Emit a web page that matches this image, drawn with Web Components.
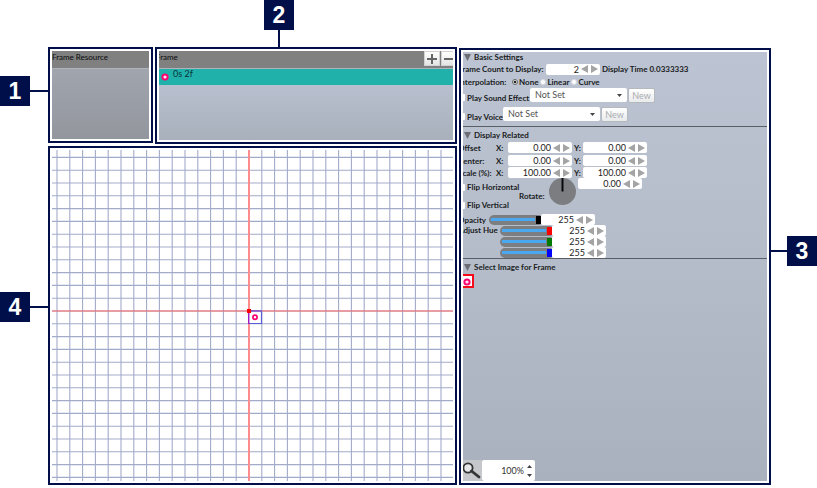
<!DOCTYPE html>
<html lang="en">
<head>
<meta charset="utf-8">
<title>Animation frame editor</title>
<style>
html,body{margin:0;background:#fff}
body{font-family:Lato,"Noto Sans",sans-serif;font-size:8px;line-height:10px;color:#1a1c22}
</style>
</head>
<body>
<frame-editor></frame-editor>
<script>
const define = (name, html, setup) => customElements.define(name, class extends HTMLElement {
  connectedCallback() {
    if (this.shadowRoot) return;
    const t = document.createElement('template');
    t.innerHTML = html;
    this.attachShadow({mode: 'open'}).append(t.content.cloneNode(true));
    if (setup) setup(this, this.shadowRoot);
  }
});

define('callout-panel', `<style>
:host{display:flex;position:relative;box-sizing:border-box;border:2px solid #000f49;padding:2px;background:#fff;min-width:0}
.body{flex:1;min-width:0;overflow:hidden;display:flex;flex-direction:column}
.tag{position:absolute;display:flex;align-items:center}
.tag b{box-sizing:border-box;width:30px;height:30px;background:#000f49;color:#fff;font:bold 23px/30px "Liberation Sans",sans-serif;text-align:center}
.tag i{background:#000f49;width:18px;height:2px}
:host([side=left]) .tag{right:100%;top:27px;margin-right:2px}
:host([side=left][low]) .tag{top:144px}
:host([side=top]) .tag{bottom:100%;left:107px;margin-bottom:2px;flex-direction:column}
:host([side=top]) .tag i{width:2px;height:17px}
:host([side=right]) .tag{left:100%;top:186px;margin-left:2px;flex-direction:row-reverse}
:host([side=right]) .tag i{width:16px}
</style><div class="body"><slot></slot></div><div class="tag"><b></b><i></i></div>`,
(h, r) => { r.querySelector('b').textContent = h.getAttribute('number'); });

define('pane-header', `<style>
:host{display:flex;justify-content:space-between;height:17px;background:#808080;border-bottom:1px solid #aeb3bb;color:#08080c;flex:none}
.t{line-height:13px;white-space:nowrap}
.a{display:flex;gap:1px;margin-right:-4px}
</style><span class="t"><slot></slot></span><span class="a"><slot name="actions"></slot></span>`);

define('tool-button', `<style>
:host{display:block}
button{display:block;padding:0;width:16px;height:15px;border:1px solid #d2d2d2;background:linear-gradient(#fff,#e4e4e4)}
svg{display:block;width:14px;height:13px}
</style><button><svg viewBox="0 0 14 13" stroke="#666" stroke-width="2"><path/></svg></button>`,
(h, r) => {
  r.querySelector('path').setAttribute('d', h.hasAttribute('minus') ? 'M2 7H12' : 'M2 7H12M7 2V12');
  r.querySelector('button').setAttribute('aria-label', h.hasAttribute('minus') ? 'Remove frame' : 'Add frame');
});

define('sprite-dot', `<style>:host{display:block;width:8px;height:8px}svg{display:block}</style>
<svg width="8" height="8" viewBox="0 0 8 8"><circle cx="4" cy="4" r="2.6" fill="#fff" stroke="#ff0073" stroke-width="2"/><circle cx="4" cy="4" r=".6" fill="#ff7ab5"/></svg>`);

define('frame-item', `<style>
:host{display:flex;height:16px;background:#20b2aa;color:#0b3340;padding-left:2px;gap:4px;font-size:9px;flex:none}
sprite-dot{margin-top:4px}span{line-height:10px}
</style><sprite-dot></sprite-dot><span><slot></slot></span>`);

define('grid-canvas', `<style>:host{display:block;flex:1;position:relative;overflow:hidden}svg{position:absolute;inset:0;width:100%;height:100%}</style>
<svg><rect width="100%" height="100%" fill="#fff"/><path class="g" stroke="#a3abca" stroke-width="1.1" fill="none"/>
<path d="M197 0V4000" stroke="#ff8c8c" stroke-width="2"/><path d="M0 161H4000" stroke="#ff6464" stroke-width="1.2"/>
<path d="M197 161H209.5V173.5H197" fill="#fff" stroke="#5a5fd6" stroke-width="1.2"/><path d="M196.8 161V174" stroke="#80c" stroke-width="1.2"/>
<path d="M197 161H209" stroke="#84b" stroke-width="1.2"/><rect x="195" y="159" width="4" height="4" fill="#f00"/>
<circle cx="203" cy="167.3" r="2.1" fill="#fff" stroke="#ff0073" stroke-width="1.7"/></svg>`,
(h, r) => {
  let d = '';
  for (let k = 0; k < 160; k++) d += `M${5 + 12.8 * k} 0V2000M0 ${7.4 + 12.8 * k}H2000`;
  r.querySelector('.g').setAttribute('d', d);
});

define('section-title', `<style>
:host{display:block}
button{all:unset;display:flex;align-items:center;gap:3px;padding-left:6px;height:100%;white-space:nowrap}
svg{width:7px;height:8px}
</style><button><svg viewBox="0 0 7 8"><path d="M0 1H7L3.5 8Z" fill="#6b6d72"/></svg><slot></slot></button>`);

define('number-stepper', `<style>
:host{display:flex;align-items:center;box-sizing:border-box;height:11px;width:64px;background:#fff;border-radius:2px;padding-right:2px;flex:none}
:host([short]){width:54px}
input{all:unset;flex:1;min-width:0;text-align:right;font:9px/11px Lato,sans-serif;height:11px;color:#222;padding-right:1px}
button{all:unset;width:7px;height:8px;display:block;margin-left:1px}
button+button{margin-left:3px}
svg{display:block}
</style><input type="text"><button aria-label="Decrease"><svg width="7" height="8" viewBox="0 0 7 8"><path d="M7 0V8L0 4Z" fill="#a4a4a4"/></svg></button><button aria-label="Increase"><svg width="7" height="8" viewBox="0 0 7 8"><path d="M0 0V8L7 4Z" fill="#a4a4a4"/></svg></button>`,
(h, r) => { const i = r.querySelector('input'); i.value = h.getAttribute('value'); i.setAttribute('aria-label', h.getAttribute('label')); });

define('tick-option', `<style>
:host{display:block}
label{display:flex;align-items:center;gap:2px;white-space:nowrap}
input{appearance:none;flex:none;margin:0;width:7px;height:7px;background:#fff;border-radius:1px}
</style><label><input type="checkbox"><slot></slot></label>`);

define('radio-group', `<style>
:host{display:flex;gap:2px}
label{display:flex;align-items:center;gap:1px}
input{appearance:none;flex:none;box-sizing:border-box;margin:0;width:6px;height:6px;border-radius:50%;background:#fff;border:1px solid #d8dbe2}
input:checked{border-color:#666;background:radial-gradient(#222 40%,#fff 60%)}
</style><label><input type="radio" name="i" checked>None</label><label><input type="radio" name="i">Linear</label><label><input type="radio" name="i">Curve</label>`);

define('sound-picker', `<style>
:host{display:flex;gap:1px;align-self:flex-start;align-items:flex-start}
.s{display:grid;width:97px}
.s>*{grid-area:1/1}
select{appearance:none;margin:0;border:0;border-radius:2px;background:#fff;height:14px;font:9px/14px Lato,sans-serif;color:#555;padding:0 5px}
svg{justify-self:end;align-self:center;margin-right:5px;pointer-events:none}
button{box-sizing:border-box;width:27px;height:15px;padding:0;border:1px solid #b5b8bd;border-radius:2px;background:linear-gradient(#fff,#e9eaec);color:#a9abae;font:9px/12px Lato,sans-serif}
</style><span class="s"><select><option>Not Set</option></select><svg width="5" height="3"><path d="M0 0H5L2.5 3Z" fill="#444"/></svg></span><button>New</button>`,
(h, r) => r.querySelector('select').setAttribute('aria-label', h.getAttribute('label')));

define('level-slider', `<style>
:host{display:block;width:52px;height:10px;flex:none}
input{appearance:none;display:block;margin:0;width:100%;height:10px;border-radius:5px 2px 2px 5px;background:linear-gradient(#4aa8f0,#4aa8f0) 2px center/44px 3px no-repeat #7c7e82}
input::-webkit-slider-thumb{appearance:none;width:5px;height:8px;background:var(--tone)}
</style><input type="range" max="255" value="255">`,
(h, r) => { h.style.setProperty('--tone', h.getAttribute('tone')); r.querySelector('input').setAttribute('aria-label', h.getAttribute('label')); });

define('settings-pane', `<style>
:host{display:flex;flex-direction:column;flex:1;background:linear-gradient(#bcc4d3,#b4bcc9 50%,#a8b1bd);font-weight:700}
.in{margin-left:-5px;flex:1;display:flex;flex-direction:column}
.row{display:flex;align-items:center;white-space:nowrap;flex:none}
.h12{height:12px}.h14{height:14px}.h19{height:19px}.h13{height:13px}.h11{height:11px}
section-title{height:10px}
.sec{border-top:1px solid #5a5e66;padding-top:2px}
.sec section-title{height:12px}
.count{width:88px}.time{margin-left:2px}.interp{width:54px}.snd{width:72px}.voi{width:45px}
.lab{width:38px}.x{width:12px}.y{width:9px;margin-left:2px}
.flip{display:grid;grid-template-columns:61px 30px 29px auto;grid-template-rows:18px 18px}
.flip>*{align-self:center}
.rot{grid-area:1/2/3/3}
.dial{grid-area:1/3/3/4;align-self:start}
.ang{grid-area:1/4;align-self:start}
.f1{grid-area:1/1}.f2{grid-area:2/1}
.op{width:31px}.hue{width:42px;align-self:flex-start}
.levels{display:grid}
.pick{width:16px;height:14px;box-sizing:border-box;border:2px solid #f20c1c;background:#fff;padding:1px 0 0 3px;margin-top:1px;appearance:none}
.zoom{display:flex;align-items:center;margin-top:auto;height:21px}
.glass{width:24px;height:21px;background:#c5c7ca;display:flex;justify-content:flex-end}
.z{display:flex;align-items:center;width:53px;height:21px;background:#fff;border-radius:2px}
.z input{all:unset;width:42px;text-align:right;font-size:9px;font-weight:400;color:#333}
.z svg{margin-left:3px}
</style><div class="in">
<section-title>Basic Settings</section-title>
<div class="row h14"><span class="count">Frame Count to Display:</span><number-stepper short value="2" label="Frame Count to Display"></number-stepper><span class="time">Display Time 0.0333333</span></div>
<div class="row h12"><span class="interp">Interpolation:</span><radio-group></radio-group></div>
<div class="row h19"><tick-option class="snd">Play Sound Effect</tick-option><sound-picker label="Sound effect"></sound-picker></div>
<div class="row h19"><tick-option class="voi">Play Voice</tick-option><sound-picker label="Voice"></sound-picker></div>
<div class="sec"><section-title>Display Related</section-title></div>
<div class="row h13"><span class="lab">Offset</span><span class="x">X:</span><number-stepper value="0.00" label="Offset X"></number-stepper><span class="x y">Y:</span><number-stepper value="0.00" label="Offset Y"></number-stepper></div>
<div class="row h13"><span class="lab">Center:</span><span class="x">X:</span><number-stepper value="0.00" label="Center X"></number-stepper><span class="x y">Y:</span><number-stepper value="0.00" label="Center Y"></number-stepper></div>
<div class="row h11"><span class="lab">Scale (%):</span><span class="x">X:</span><number-stepper value="100.00" label="Scale X"></number-stepper><span class="x y">Y:</span><number-stepper value="100.00" label="Scale Y"></number-stepper></div>
<div class="flip"><tick-option class="f1">Flip Horizontal</tick-option><tick-option class="f2">Flip Vertical</tick-option><span class="rot">Rotate:</span>
<svg class="dial" width="27" height="27"><circle cx="13.5" cy="13.5" r="13.5" fill="#7b7d80"/><path d="M13.5 0V13.5" stroke="#08080c" stroke-width="2"/></svg>
<number-stepper class="ang" value="0.00" label="Rotate"></number-stepper></div>
<div class="row h11"><span class="op">Opacity</span><level-slider tone="#000" label="Opacity"></level-slider><number-stepper short value="255" label="Opacity value"></number-stepper></div>
<div class="row"><span class="hue">Adjust Hue</span><div class="levels">
<div class="row h11"><level-slider tone="#f00" label="Red"></level-slider><number-stepper short value="255" label="Red value"></number-stepper></div>
<div class="row h11"><level-slider tone="#007a00" label="Green"></level-slider><number-stepper short value="255" label="Green value"></number-stepper></div>
<div class="row h11"><level-slider tone="#00f" label="Blue"></level-slider><number-stepper short value="255" label="Blue value"></number-stepper></div></div></div>
<div class="sec"><section-title>Select Image for Frame</section-title></div>
<button class="pick" aria-label="Frame image"><sprite-dot></sprite-dot></button>
<div class="zoom"><span class="glass"><svg width="19" height="21" viewBox="0 0 19 21"><circle cx="5" cy="8" r="4.6" fill="#e4e6e8" stroke="#333" stroke-width="1.8"/><path d="M8.5 11L16 17" stroke="#333" stroke-width="2.8" stroke-linecap="round"/></svg></span>
<span class="z"><input type="text" value="100%" aria-label="Zoom"><svg width="5" height="12"><path d="M0 3L2.5 0L5 3ZM0 9L2.5 12L5 9Z" fill="#444"/></svg></span></div>
</div>`);

define('frame-editor', `<style>
:host{display:grid;box-sizing:border-box;min-height:100vh;padding:47px 46px 3px 48px;grid-template-columns:409fr 312fr;gap:2px}
.left{display:grid;grid-template-columns:105fr 302fr;grid-template-rows:97px 1fr;gap:2px;min-width:0}
.one{margin-bottom:1px}.three{margin-top:1px}
.four{grid-column:1/3}
.cut{margin-left:-3px}
.res{flex:1;background:linear-gradient(#a0a5ae,#93969d)}
.list{flex:1;background:linear-gradient(#b8c0cf,#a8b0bb)}
</style><div class="left">
<callout-panel class="one" number="1" side="left"><pane-header>Frame Resource</pane-header><div class="res"></div></callout-panel>
<callout-panel class="two" number="2" side="top"><pane-header><span class="cut">Frame</span><tool-button slot="actions"></tool-button><tool-button slot="actions" minus></tool-button></pane-header><frame-item>0s 2f</frame-item><div class="list"></div></callout-panel>
<callout-panel class="four" number="4" side="left" low><grid-canvas></grid-canvas></callout-panel></div>
<callout-panel class="three" number="3" side="right"><settings-pane></settings-pane></callout-panel>`);
</script>
</body>
</html>
